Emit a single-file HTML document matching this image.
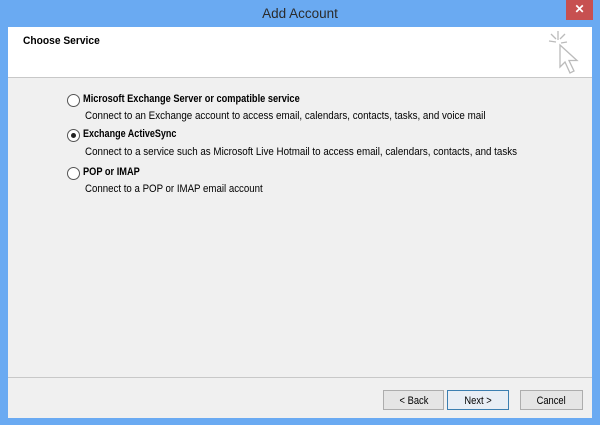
<!DOCTYPE html>
<html><head><style>
body{margin:0;width:600px;height:425px;overflow:hidden;font-family:"Liberation Sans",sans-serif;}
.win{position:absolute;left:0;top:0;width:600px;height:425px;background:#6aaaf2;}
.title{position:absolute;top:6px;left:0;width:600px;text-align:center;font-size:13.5px;color:#2b2b2b;}
.close{position:absolute;left:566px;top:0;width:27px;height:20px;background:#c75050;color:#fff;font-size:12px;text-align:center;line-height:19px;font-weight:bold;}
.body{position:absolute;left:8px;top:27px;width:584px;height:391px;background:#f0f0f0;}
.head{position:absolute;left:0;top:0;width:584px;height:50px;background:#fff;border-bottom:1px solid #c8c8c8;}
.t{position:absolute;font-size:11px;color:#000;white-space:nowrap;transform:scaleX(0.89);transform-origin:0 0;}
.b{font-weight:bold;}
.r{position:absolute;width:11px;height:11px;border:1px solid #555;border-radius:50%;background:#fff;}
.r.on::after{content:"";position:absolute;left:3px;top:3px;width:5px;height:5px;border-radius:50%;background:#222;}
.sep{position:absolute;left:0;top:350px;width:584px;height:1px;background:#c8c8c8;}
.btn{position:absolute;top:363px;height:18px;border:1px solid #adadad;background:#e5e5e5;text-align:center;line-height:18px;}
.btn span{display:inline-block;font-size:11px;transform:scaleX(0.85);}
</style></head><body>
<div class="win">
<div class="title">Add Account</div>
<div class="close">✕</div>
<div class="body">
<div class="head"><div class="t b" style="left:15px;top:8px;transform:scaleX(0.93)">Choose Service</div>
<svg style="position:absolute;left:538px;top:3px" width="40" height="46" viewBox="0 0 40 46">
<g stroke="#bbb" stroke-width="1.3" fill="none">
<line x1="12" y1="1" x2="12" y2="10"/><line x1="3" y1="11" x2="10" y2="12"/><line x1="5" y1="4" x2="10" y2="9"/><line x1="19" y1="4" x2="14" y2="9"/><line x1="21" y1="12" x2="15" y2="13"/>
<path d="M14 15 L14 37 L19 32 L24 43 L28 41 L23 30.5 L31 30.5 Z" fill="#fff"/>
</g></svg>
</div>
<div class="r" style="left:59px;top:67px"></div>
<div class="t b" style="left:75px;top:66px;transform:scaleX(0.84)">Microsoft Exchange Server or compatible service</div>
<div class="t" style="left:77px;top:83px">Connect to an Exchange account to access email, calendars, contacts, tasks, and voice mail</div>
<div class="r on" style="left:59px;top:102px"></div>
<div class="t b" style="left:75px;top:101px;transform:scaleX(0.82)">Exchange ActiveSync</div>
<div class="t" style="left:77px;top:119px">Connect to a service such as Microsoft Live Hotmail to access email, calendars, contacts, and tasks</div>
<div class="r" style="left:59px;top:140px"></div>
<div class="t b" style="left:75px;top:139px;transform:scaleX(0.84)">POP or IMAP</div>
<div class="t" style="left:77px;top:156px;transform:scaleX(0.88)">Connect to a POP or IMAP email account</div>
<div class="sep"></div>
<div class="btn" style="left:375px;width:59px"><span>&lt; Back</span></div>
<div class="btn" style="left:439px;width:60px;border-color:#3c7fb1;background:#e8eef5"><span>Next &gt;</span></div>
<div class="btn" style="left:512px;width:61px"><span>Cancel</span></div>
</div>
</div>
</body></html>
